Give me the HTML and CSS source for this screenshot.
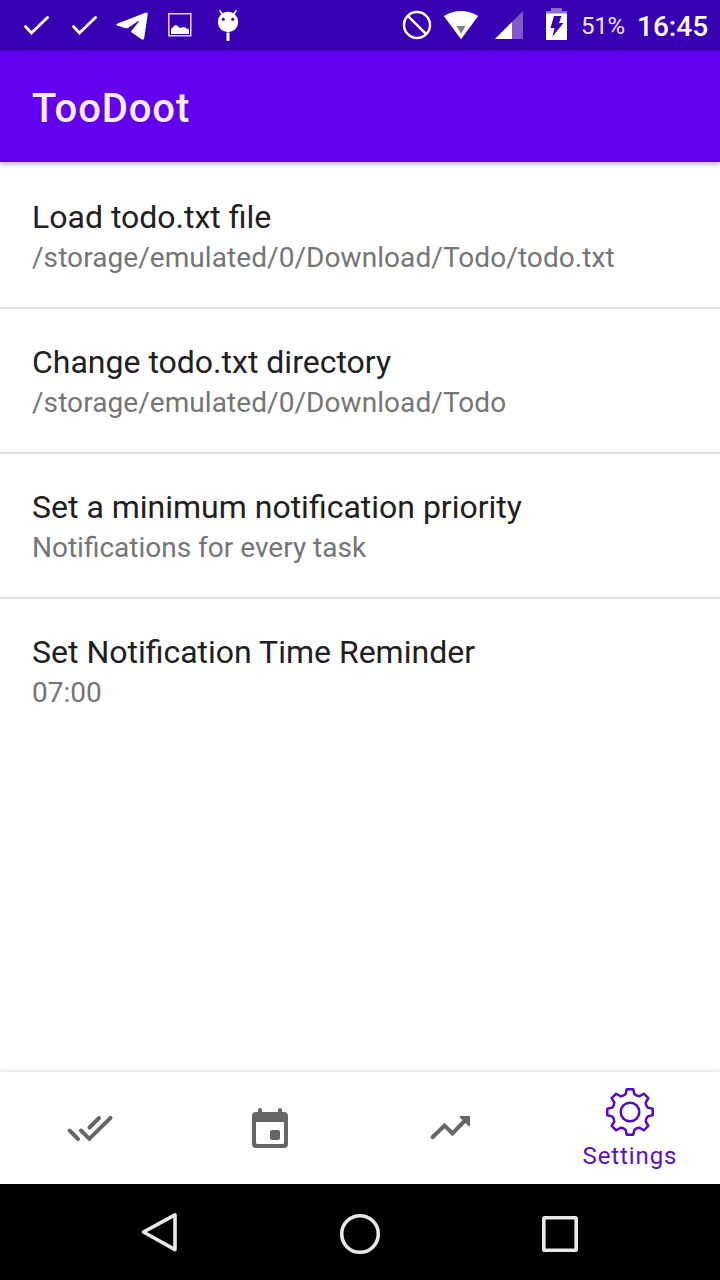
FILE: index.html
```html
<!DOCTYPE html>
<html lang="en">
<head>
<meta charset="utf-8">
<title>TooDoot</title>
<link rel="stylesheet" href="styles.css">
</head>
<body>
<div class="screen">
  <header class="status-bar">
    <div class="notifications">
      <svg class="slot" viewBox="0 0 48 50"><path class="line-white" d="M13.500 26.500l6 6.500 16-15.500"/></svg>
      <svg class="slot" viewBox="0 0 48 50"><path class="line-white" d="M13.500 26.500l6 6.500 16-15.500"/></svg>
      <svg class="slot" viewBox="-4 0 48 50"><path fill="#fff" d="M34 12.500Q36 12 35.700 14.500L32.200 38Q31.800 40.500 29.500 39.300L19.800 32.500Q18.500 31.500 20 30L27 21.500Q27.300 20.600 26 21.200L15.800 28Q14.500 28.600 12.500 28L5 25.600Q3.400 24.700 5 23.800Z"/></svg>
      <svg class="slot" viewBox="0 0 48 50"><path fill="none" stroke="#e4d4fa" stroke-width="1.500" d="M12.800 13.800h22v22h-22z"/><path fill="#fff" d="M15 34v-5l3.500-3.500q1.500-1 2.500 0l3 2.500 3.500-1q2 0 3 1.500l2.500 1V34z"/></svg>
      <svg class="slot" viewBox="0 0 48 50"><circle cx="24" cy="22" r="10.200" fill="#fff"/><path fill="none" stroke="#fff" stroke-width="1.700" stroke-linecap="round" d="M19 15l-3-4M29 15l3-4"/><path stroke="#fff" stroke-width="3" d="M24 32.500v8.500"/><circle cx="19.300" cy="19.300" r="1.500" fill="#39009f"/><circle cx="28.700" cy="19.300" r="1.500" fill="#39009f"/></svg>
    </div>
    <div class="indicators">
      <svg class="ind-block" viewBox="0 0 30 50"><g fill="none" stroke="#fff" stroke-width="2.500"><circle cx="15" cy="25" r="13"/><path d="M5.800 15.800l18.400 18.400"/></g></svg>
      <svg class="ind-wifi" viewBox="0 0 36 50"><path fill="#fff" d="M.8 16Q18 5.800 35.200 16L18 39.200z"/><path fill="#85808f" d="M13.500 26h9L18 34z"/></svg>
      <svg class="ind-signal" viewBox="0 0 28 50"><path fill="#7f58c9" d="M28 11v28H0z"/><path fill="#fff" d="M17 22v17H0z"/></svg>
      <svg class="ind-battery" viewBox="-.5 0 22 50"><path fill="#8f6bd0" d="M5.500 8h11v3h5v3H.500v-3h5z"/><path fill="#fff" d="M.500 13.500h21V40H.500z"/><path fill="#3900a9" d="M8.500 16h7.500l-2.500 7h4.500L7 36.500l2-8.500H5z"/></svg>
      <span class="battery-level">51%</span>
      <span class="clock">16:45</span>
    </div>
  </header>
  <div class="app-bar"><h1 class="app-title">TooDoot</h1></div>
  <main class="preferences">
    <section class="preference"><h2 class="name">Load todo.txt file</h2><p class="summary file-path">/storage/emulated/0/Download/Todo/todo.txt</p></section>
    <section class="preference"><h2 class="name">Change todo.txt directory</h2><p class="summary file-path">/storage/emulated/0/Download/Todo</p></section>
    <section class="preference"><h2 class="name">Set a minimum notification priority</h2><p class="summary">Notifications for every task</p></section>
    <section class="preference"><h2 class="name">Set Notification Time Reminder</h2><p class="summary">07:00</p></section>
  </main>
  <nav class="tabs">
    <div class="tab"><svg class="tab-icon" viewBox="0 0 48 48"><path fill="none" stroke="#666" stroke-width="4" stroke-linecap="round" d="M3.700 26.500l8.300 8.500M23.500 23.500L33 14M15 26.500l8.300 8.300 21.200-21"/></svg></div>
    <div class="tab"><svg class="tab-icon" viewBox="0 0 48 48"><path fill="#666" fill-rule="evenodd" d="M12 6a2 2 0 0 1 4 0v2h16V6a2 2 0 0 1 4 0v2h2a4 4 0 0 1 4 4v28a4 4 0 0 1-4 4H10a4 4 0 0 1-4-4V12a4 4 0 0 1 4-4h2zM10 18v20.500q0 1.500 1.500 1.500h25q1.500 0 1.500-1.500V18z"/><rect x="24" y="26" width="10" height="10" rx="2" fill="#666"/></svg></div>
    <div class="tab"><svg class="tab-icon" viewBox="0 0 48 48"><path fill="none" stroke="#666" stroke-width="4" stroke-linecap="round" d="M6.500 33.200L18.500 21.500l8 8L39 16.500"/><path fill="#666" d="M34.500 12H43a1 1 0 0 1 1 1v8.500q-.3 1.300-1.500.4l-8.500-8.500q-.6-1 .5-1.400z"/></svg></div>
    <div class="tab active">
      <svg class="tab-icon" viewBox="-24 -24 48 48"><g fill="none" stroke="#5607c6" stroke-width="2.500" stroke-linejoin="round"><circle r="9.300"/><path d="M-3.200-22.700H3.200L4.400-17.800Q6.500-15.700 9.500-15.700L13.800-18.300 18.300-13.800 15.700-9.500Q15.700-6.500 17.800-4.400L22.700-3.200V3.200L17.800 4.400Q15.700 6.500 15.700 9.500L18.300 13.800 13.800 18.300 9.500 15.700Q6.500 15.700 4.400 17.800L3.200 22.700H-3.200L-4.400 17.800Q-6.500 15.700-9.500 15.700L-13.800 18.300-18.300 13.800-15.700 9.500Q-15.700 6.500-17.800 4.400L-22.700 3.200V-3.200L-17.800-4.400Q-15.700-6.500-15.700-9.500L-18.300-13.800-13.800-18.300-9.500-15.700Q-6.500-15.700-4.400-17.800Z"/></g></svg>
      <span class="tab-label">Settings</span>
    </div>
  </nav>
  <footer class="system-nav">
    <svg class="nav-key" viewBox="0 0 48 48"><path d="M7.500 22L39 4.800v34.800z"/></svg>
    <svg class="nav-key" viewBox="0 0 48 48"><circle cx="24" cy="24" r="18.300"/></svg>
    <svg class="nav-key" viewBox="0 0 48 48"><rect x="7.800" y="7.800" width="32.400" height="32.400" rx="1"/></svg>
  </footer>
</div>
</body>
</html>
```
FILE: styles.css
```css
* { box-sizing: border-box; }
body, h1, h2, p { margin: 0; }
body { font-family: Roboto, "Noto Sans", sans-serif; background: #fff; }
svg { display: block; flex: none; }
.screen { width: 720px; height: 1280px; display: flex; flex-direction: column; overflow: hidden; }
.status-bar { height: 50px; flex: none; background: #3700b3; color: #fff; display: flex; justify-content: space-between; padding: 0 12px; }
.notifications, .indicators { display: flex; align-items: center; }
.slot { width: 48px; height: 50px; }
.line-white { fill: none; stroke: #fff; stroke-width: 2.8; stroke-linecap: round; }
.indicators svg { height: 50px; }
.ind-block { width: 30px; margin-right: 11px; }
.ind-wifi { width: 36px; margin-right: 16px; }
.ind-signal { width: 28px; margin-right: 22px; }
.ind-battery { width: 22px; margin-right: 14px; }
.battery-level { width: 43px; margin-right: 13px; font-size: 24px; line-height: 50px; padding-top: 2px; color: #eee5fb; letter-spacing: -.3px; white-space: nowrap; }
.clock { width: 71px; font-size: 28px; font-weight: 500; line-height: 50px; padding-top: 3px; white-space: nowrap; }
.app-bar { height: 112px; flex: none; background: #6200ee; display: flex; align-items: center; padding: 6px 32px 0; box-shadow: 0 2px 5px rgba(0, 0, 0, .32); z-index: 1; }
.app-title { color: #fbefff; font-size: 40px; font-weight: 500; line-height: 48px; letter-spacing: .9px; }
.preferences { flex: 1; }
.preference { height: 145px; padding: 34px 32px 0; border-bottom: 2px solid #e0e0e0; }
.preference:first-child { height: 147px; padding-top: 36px; }
.preference:last-child { border-bottom: 0; }
.name { color: #202020; font-size: 32px; font-weight: 400; line-height: 38px; }
.summary { color: #757575; font-size: 28px; line-height: 34px; margin-top: 5px; }
.file-path { letter-spacing: .07px; }
.tabs { height: 112px; flex: none; display: grid; grid-template-columns: repeat(4, 1fr); background: #fff; box-shadow: 0 -1px 4px rgba(0, 0, 0, .14); }
.tab { display: flex; flex-direction: column; align-items: center; justify-content: center; }
.tab-icon { width: 48px; height: 48px; }
.tab.active { justify-content: flex-start; padding-top: 16px; }
.tab-label { color: #5a0fc0; font-size: 24px; line-height: 28px; letter-spacing: .9px; margin-top: 6px; }
.system-nav { height: 96px; flex: none; background: #000; display: flex; justify-content: center; align-items: center; gap: 152px; padding-top: 4px; }
.nav-key { width: 48px; height: 48px; fill: none; stroke: #e9e9e9; stroke-width: 3.6; stroke-linejoin: round; }
```
